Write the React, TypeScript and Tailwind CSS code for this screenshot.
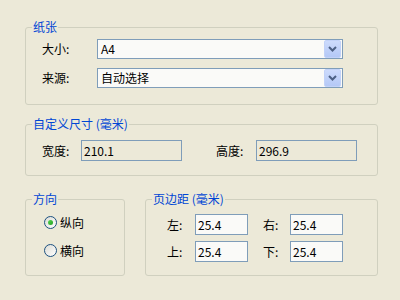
import React from "react";

const font = { fontFamily: '"Noto Sans CJK SC", "Liberation Sans", sans-serif' };

function Group({
  title,
  className,
  bodyClass,
  children,
}: {
  title: string;
  className?: string;
  bodyClass?: string;
  children: React.ReactNode;
}) {
  return (
    <fieldset
      className={`border border-[#d0d0bf] rounded-[3px] min-w-0 p-0 ${className || ""}`}
    >
      <legend className="ml-[6px] px-[1px] text-[12px] leading-[14px] text-[#0046d5]">
        {title}
      </legend>
      <div className={bodyClass}>{children}</div>
    </fieldset>
  );
}

function Combo({ value }: { value: string }) {
  return (
    <div className="flex items-center h-[20px] w-[246px] border border-[#7f9db9] bg-[#fafaf8]">
      <span className="flex-1 pl-[3px] text-[12px] leading-[18px]">{value}</span>
      <div className="mr-[1px] w-[17px] h-[18px] rounded-[2px] border border-[#c2d2f8] bg-gradient-to-b from-[#cddbfc] to-[#b4c8f6] flex items-center justify-center">
        <svg width="9" height="6" viewBox="0 0 9 6">
          <path d="M1 1 L4.5 4.5 L8 1" stroke="#4d6185" strokeWidth="2" fill="none" />
        </svg>
      </div>
    </div>
  );
}

function TextBox({
  value,
  width,
  disabled,
}: {
  value: string;
  width: string;
  disabled?: boolean;
}) {
  return (
    <div
      className={`${width} h-[21px] border border-[#7f9db9] pl-[2px] text-[12px] leading-[19px] ${
        disabled ? "bg-[#ece9d8]" : "bg-[#fafaf8]"
      }`}
    >
      {value}
    </div>
  );
}

function Radio({ label, checked }: { label: string; checked?: boolean }) {
  return (
    <div className="flex items-center gap-[3px] h-[13px]">
      <div className="w-[13px] h-[13px] rounded-full border border-[#1c5180] bg-gradient-to-br from-[#dcdcd5] to-[#ffffff] flex items-center justify-center">
        {checked && (
          <div className="w-[5px] h-[5px] rounded-full bg-gradient-to-br from-[#55d551] to-[#21a121]" />
        )}
      </div>
      <span className="text-[12px] leading-[13px]">{label}</span>
    </div>
  );
}

export default function App() {
  return (
    <div
      className="w-[400px] h-[300px] bg-[#ece9d8] text-black pl-[25px] pr-[22px] pt-[20px] flex flex-col"
      style={font}
    >
      {/* 纸张 */}
      <Group title="纸张" bodyClass="pt-[5px] pb-[16px] pl-[16px]">
        <div className="flex flex-col gap-[9px]">
          <div className="flex items-center">
            <span className="w-[55px] text-[12px]">大小:</span>
            <Combo value="A4" />
          </div>
          <div className="flex items-center">
            <span className="w-[55px] text-[12px]">来源:</span>
            <Combo value="自动选择" />
          </div>
        </div>
      </Group>

      {/* 自定义尺寸 */}
      <Group title="自定义尺寸 (毫米)" className="mt-[12px]" bodyClass="pt-[9px] pb-[14px] pl-[16px]">
        <div className="flex items-center">
          <span className="w-[39px] text-[12px]">宽度:</span>
          <TextBox value="210.1" width="w-[101px]" disabled />
          <span className="ml-[34px] w-[40px] text-[12px]">高度:</span>
          <TextBox value="296.9" width="w-[101px]" disabled />
        </div>
      </Group>

      {/* 方向 / 页边距 */}
      <div className="mt-[16px] flex gap-[20px] items-stretch">
        <Group title="方向" className="w-[100px]" bodyClass="pt-[10px] pl-[18px]">
          <div className="flex flex-col gap-[15px]">
            <Radio label="纵向" checked />
            <Radio label="横向" />
          </div>
        </Group>
        <Group title="页边距 (毫米)" className="flex-1" bodyClass="pt-[8px] pb-[13px] pl-[21px]">
          <div className="flex flex-col gap-[6px]">
            <div className="flex items-center">
              <span className="w-[28px] text-[12px]">左:</span>
              <TextBox value="25.4" width="w-[53px]" />
              <span className="ml-[15px] w-[27px] text-[12px]">右:</span>
              <TextBox value="25.4" width="w-[53px]" />
            </div>
            <div className="flex items-center">
              <span className="w-[28px] text-[12px]">上:</span>
              <TextBox value="25.4" width="w-[53px]" />
              <span className="ml-[15px] w-[27px] text-[12px]">下:</span>
              <TextBox value="25.4" width="w-[53px]" />
            </div>
          </div>
        </Group>
      </div>
    </div>
  );
}
